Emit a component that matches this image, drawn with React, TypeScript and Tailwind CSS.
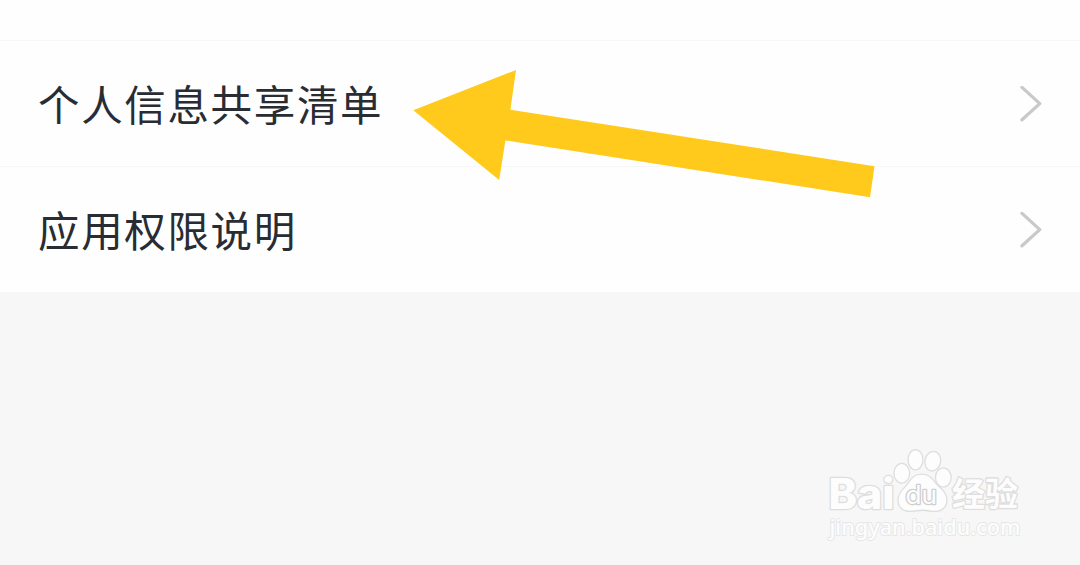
const ITEMS = ['个人信息共享清单', '应用权限说明'];

function Chevron() {
  return (
    <svg width="24" height="38" viewBox="0 0 24 38" fill="none" className="shrink-0 -mt-px">
      <path d="M3 3.4 L20.8 19.6 L3 35.8" stroke="#c9c9c9" strokeWidth="3.3" strokeLinejoin="round" strokeLinecap="round" />
    </svg>
  );
}

function Arrow() {
  return (
    <svg width="462" height="128" viewBox="413 70 462 128" className="absolute left-[413px] top-[70px] pointer-events-none">
      <path d="M413.3 110.3 L516 70 L510.4 109.8 L874.5 166.2 L870 197.2 L505.4 140.4 L499.2 180 Z" fill="#ffca1b" />
    </svg>
  );
}

function Watermark() {
  return (
    <svg width="210" height="110" viewBox="0 0 210 110" className="absolute left-[820px] top-[440px] pointer-events-none">
      <g fill="#fdfdfd" stroke="#dedede" strokeWidth="2.6" strokeLinejoin="round" paintOrder="stroke">
        {/* Wordmark */}
        <text x="8.5" y="69.3" fontSize="42" fontWeight="800" fontFamily="Inter, sans-serif" textLength="66" lengthAdjust="spacingAndGlyphs">Bai</text>

        {/* Paw */}
        <ellipse cx="81.8" cy="33.3" rx="7.2" ry="9.2" />
        <ellipse cx="95.5" cy="19.8" rx="6.8" ry="9.5" />
        <ellipse cx="112.8" cy="21.2" rx="7.2" ry="9.2" transform="rotate(12 112.8 21.2)" />
        <ellipse cx="123.3" cy="37.5" rx="7.2" ry="9" />
        <path d="M102 34.8 C110 34.8 113 41 117 45.5 C122 50 126.3 54 126.3 60 C126.3 67.5 121 70.8 114.5 70.8 C109 70.8 107 69.6 102.5 69.6 C98 69.6 95 70.8 90 70.8 C83 70.8 78.7 67 78.7 60 C78.7 53 83.5 50 87.5 45 C91.5 39.5 94 34.8 102 34.8 Z" />
        <text x="85.5" y="64" fontSize="25" fontWeight="400" fontFamily="Inter, sans-serif" stroke="#cfcfcf" textLength="31.5" lengthAdjust="spacingAndGlyphs">du</text>

        <text x="132" y="66" fontSize="33" fontWeight="700" fontFamily='"Noto Sans CJK SC", sans-serif' textLength="66" lengthAdjust="spacingAndGlyphs">经验</text>
        <text x="9.5" y="94.8" fontSize="22" fontWeight="500" fontFamily='"Noto Sans", sans-serif' strokeWidth="1.8" stroke="#e6e6e6" textLength="191" lengthAdjust="spacingAndGlyphs">jingyan.baidu.com</text>
      </g>
    </svg>
  );
}

export default function App() {
  return (
    <div className="relative w-full h-[565px] overflow-hidden bg-[#f7f7f7]">
      <div className="h-[292px] bg-[#fefefe] pt-10">
        {ITEMS.map(item => (
          <div key={item} className="flex h-[126px] items-center justify-between border-t border-[#f7f7f7] pl-[38px] pr-[37px]">
            <span className="font-['Noto_Sans_CJK_SC',sans-serif] text-[41.5px] leading-[42px] pb-0.5 tracking-[1.65px] text-[#292c33] font-normal whitespace-nowrap">
              {item}
            </span>
            <Chevron />
          </div>
        ))}
      </div>
      <Arrow />
      <Watermark />
    </div>
  );
}
